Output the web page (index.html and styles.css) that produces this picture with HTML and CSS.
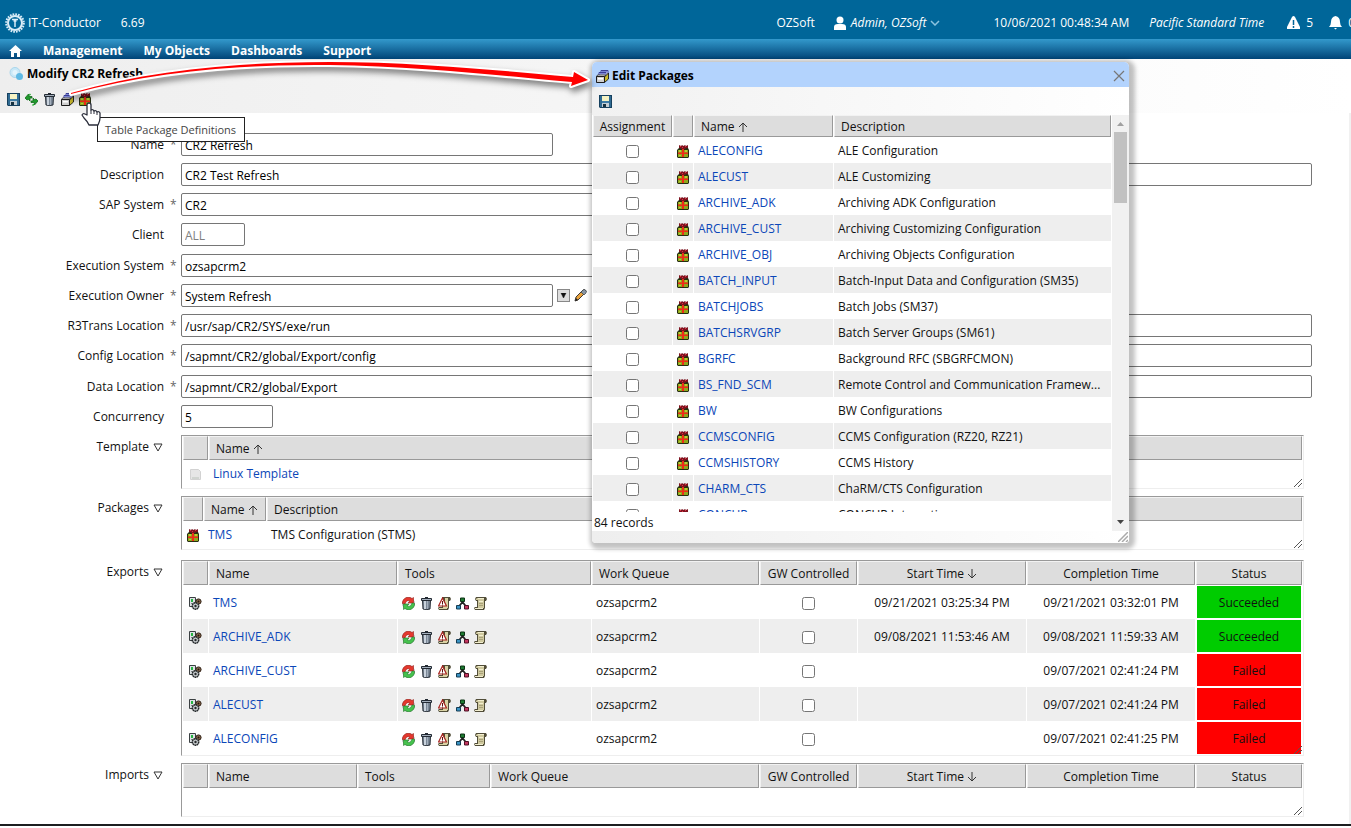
FILE: index.html
```html
<!DOCTYPE html>
<html lang="en">
<head>
    <meta charset="UTF-8">
    <meta name="viewport" content="width=device-width, initial-scale=1.0">
    <title>IT-Conductor - Modify CR2 Refresh</title>
    <link rel="stylesheet" href="styles.css">
</head>
<body>
    <!-- Shared icons -->
    <svg class="sprite" aria-hidden="true">
        <symbol id="i-save" viewBox="0 0 13 13">
            <path d="M0 0h13v13H1l-1-1z" fill="#16405e"/>
            <path d="M1 1h2v11H1zM10 1h2v11h-2z" fill="#2f6a92"/>
            <path d="M3 1h7v5H3z" fill="#f6f3c4"/>
            <path d="M3 6h7v2H3z" fill="#3d7ca6"/>
            <path d="M3 8h7v4H3z" fill="#c3ced6"/>
            <path d="M4 9h3v3H4z" fill="#16303f"/>
        </symbol>
        <symbol id="i-refresh" viewBox="0 0 13 13">
            <path d="M0 5l3.500-4v2.500H7V5H5v3L3.500 6.500 2 7z" fill="#1f9b2c" stroke="#146b1d" stroke-width=".8"/>
            <path d="M13 8l-3.500 4V9.500H6V8h2V5l1.500 1.500L11 6z" fill="#1f9b2c" stroke="#146b1d" stroke-width=".8"/>
            <path d="M4 2.500L5.500 1M9 11l-1.500 1.500" stroke="#2fb43c" stroke-width="1.500"/>
        </symbol>
        <symbol id="i-trash" viewBox="0 0 13 13">
            <path d="M2.500 3h8L10 12q-3 1-7 0z" fill="#7b8897" stroke="#232a33"/>
            <path d="M4 4h2v8H4z" fill="#c9d2dc"/>
            <path d="M7 4h1v8H7z" fill="#a4afbc"/>
            <path d="M1.500 1.500h10v2h-10z" fill="#a5b0bd" stroke="#232a33"/>
            <path d="M5 0h3v1H5z" fill="#232a33"/>
        </symbol>
        <symbol id="i-stack" viewBox="0 0 13 13">
            <path d="M5 .5h7v6H5z" fill="#fff" stroke="#3a3f96"/>
            <path d="M5 1h7v1.500H5z" fill="#7c86d8"/>
            <path d="M3 2.500h7v6H3z" fill="#fff" stroke="#3a3f96"/>
            <path d="M3 3h7v1.500H3z" fill="#7c86d8"/>
            <path d="M1.500 5h8l-1 2h-8z" fill="#fff" stroke="#1c1c1c" stroke-width=".8"/>
            <path d="M8.500 7l4-4v6l-4 3.500z" fill="#c9b92c" stroke="#1c1c1c" stroke-width=".9"/>
            <path d="M.5 6.500h8v6h-8z" fill="#cfcfcf" stroke="#1c1c1c"/>
            <path d="M2 8h5v1.500H2z" fill="#fff"/>
        </symbol>
        <symbol id="i-gift" viewBox="0 0 13 13">
            <path d="M2 3h9l1 2v7l-1 1H1l-1-1V5z" fill="#262e10"/>
            <path d="M1 5h10v3H1zM1 9h10v3H1z" fill="#8fa81c"/>
            <path d="M2 5h2v2H2zM8 5h2v2H8zM2 10h2v1H2z" fill="#b9cc33"/>
            <path d="M5 4h2v8H5zM1 7.500h10v1.500H1z" fill="#ee2c18"/>
            <path d="M2 0l2 1 1-1 1.500 1L8 0l1 1 2-1v3H9L8 4H4L3 3H2z" fill="#7d1420"/>
            <path d="M3 1h1v1H3zM5 2h1v1H5zM8 1h1v1H8z" fill="#e23444"/>
        </symbol>
        <symbol id="i-job" viewBox="0 0 13 13">
            <path d="M.5.500h6v9h-6z" fill="#dde2e4" stroke="#3b4042"/>
            <path d="M2 2h2v3H2z" fill="#27b544"/>
            <path d="M2 6h3v1H2z" fill="#7c8386"/>
            <circle cx="9.500" cy="4.500" r="2.600" fill="#8b6a4c" stroke="#2b1d13"/>
            <circle cx="9.500" cy="4.500" r="1" fill="#221510"/>
            <circle cx="6.500" cy="9" r="3.200" fill="#c9cdcf" stroke="#25292b" stroke-width="1.500" stroke-dasharray="1.700 .4"/>
            <circle cx="6.500" cy="9" r="1.200" fill="#25292b"/>
        </symbol>
        <symbol id="i-cycle" viewBox="0 0 13 13">
            <circle cx="6.500" cy="6.500" r="6" fill="#f6f6f6" stroke="#8b8b8b" stroke-width=".6"/>
            <path d="M.3 6.500C.5 1 6-1.500 10 1.500L11.500.500V6H6l1.800-2C5.500 3 4 4 3 7z" fill="#e4382e" stroke="#98201a" stroke-width=".6"/>
            <path d="M12.700 6.500C12.500 12 7 14.500 3 11.500L1.500 12.500V7H7L5.200 9C7.500 10 9 9 10 6z" fill="#45c24d" stroke="#1f7427" stroke-width=".6"/>
        </symbol>
        <symbol id="i-scroll" viewBox="0 0 13 13">
            <path d="M2 0h10l1 2-1 2h-1v7l-1 2H1l-1-2 1-1h2V4H2L1 2z" fill="#514d38"/>
            <path d="M3 1h7v10H4V3H2V2z" fill="#cfc99f"/>
            <path d="M4 1h6v1H4zM1 11h8v1H1zM5 4h4v1H5z" fill="#f2eecf"/>
            <path d="M5 6h4v1H5zM5 8h4v1H5z" fill="#aaa27a"/>
        </symbol>
        <symbol id="i-errlog" viewBox="0 0 13 13">
            <path d="M4 0h8l1 2-1 2h-1v7l-1 2H1l-1-2 1-1h3z" fill="#514d38"/>
            <path d="M7 1h3v10H5V9h2zM1 11h8v1H1z" fill="#d9d2a4"/>
            <path d="M4.500 1L8.500 9h-8z" fill="#fff" stroke="#a8241f" stroke-width="1.200"/>
            <path d="M4 4h1v3H4zM4 7.500h1v1H4z" fill="#5e0f0d"/>
        </symbol>
        <symbol id="i-tree" viewBox="0 0 13 13">
            <path d="M6.500 4v3M6.500 5L2.500 10M6.500 5l4 5" stroke="#222" stroke-width="1.800"/>
            <path d="M4.500 1h4v3.500h-4z" fill="#1d7a31" stroke="#0d3315"/>
            <path d="M.5 8.500h4v3.500h-4z" fill="#3a93c4" stroke="#143b52"/>
            <path d="M8.500 8.500h4v3.500h-4z" fill="#c43660" stroke="#4c1022"/>
        </symbol>
        <symbol id="i-up" viewBox="0 0 10 10">
            <path d="M5 10V1M1 5l4-4 4 4" fill="none" stroke="#333" stroke-width="1"/>
        </symbol>
        <symbol id="i-down" viewBox="0 0 10 10">
            <path d="M5 0v9M1 5l4 4 4-4" fill="none" stroke="#333" stroke-width="1"/>
        </symbol>
        <symbol id="i-tri" viewBox="0 0 10 9">
            <path d="M1 1h8L5 8z" fill="none" stroke="#333" stroke-width="1"/>
        </symbol>
        <symbol id="i-grip" viewBox="0 0 10 10">
            <path d="M1 9l8-8M5 9l4-4" stroke="#555"/>
        </symbol>
    </svg>

    <header class="topbar">
        <svg class="logo" viewBox="0 0 20 20">
            <circle cx="10" cy="10" r="8.800" fill="none" stroke="#d9ecf7" stroke-width="2" stroke-dasharray="1.700 1.065"/>
            <circle cx="10" cy="10" r="7" fill="none" stroke="#d9ecf7" stroke-width="2"/>
            <path d="M7 6.500h6M10 6v8M8.500 8l3 0" stroke="#d9ecf7" stroke-width="1.500"/>
        </svg>
        <span class="brand">IT-Conductor</span>
        <span>6.69</span>
        <div class="session">
            <span class="org">OZSoft</span>
            <button class="user" type="button">
                <svg width="14" height="14" viewBox="0 0 14 14"><circle cx="7" cy="4" r="3.500" fill="#fff"/><path d="M1 14v-3q0-3 4-3h4q4 0 4 3v3z" fill="#fff"/></svg>
                <i>Admin, OZSoft</i>
                <svg class="chev" width="10" height="6" viewBox="0 0 10 6"><path d="M1 1l4 4 4-4" fill="none" stroke="#8cc3df" stroke-width="1.500"/></svg>
            </button>
            <time>10/06/2021 00:48:34 AM</time>
            <i class="zone">Pacific Standard Time</i>
            <span class="notice">
                <svg width="13" height="13" viewBox="0 0 13 13"><path d="M5 1q1.500-2 3 0l5 10v2H0v-2z" fill="#fff"/><path d="M6.500 4v5M6.500 10v2" stroke="#069" stroke-width="1.500"/></svg>
                5
            </span>
            <span class="notice">
                <svg width="13" height="14" viewBox="0 0 13 14"><path d="M6.500 0q4.500 1 4.500 6 0 3 2 5H0q2-2 2-5 0-5 4.500-6zM5 12h3l-1.500 1.500z" fill="#fff"/></svg>
                0
            </span>
        </div>
    </header>

    <nav class="menu">
        <a href="#" aria-label="Home"><svg width="13" height="12" viewBox="0 0 13 12"><path d="M6.500 0L13 6h-2v6H8V8H5v4H2V6H0z" fill="#fff"/></svg></a>
        <a href="#">Management</a>
        <a href="#">My Objects</a>
        <a href="#">Dashboards</a>
        <a href="#">Support</a>
    </nav>

    <section class="page-head">
        <h1>
            <svg width="15" height="14" viewBox="0 0 15 14"><circle cx="6" cy="5.500" r="5" fill="#c9e8f7" stroke="#a9d6ec"/><circle cx="6" cy="5.500" r="2.500" fill="#e3f4fc"/><circle cx="10.500" cy="9.500" r="3.500" fill="#5fb9e4"/></svg>
            Modify CR2 Refresh
        </h1>
        <div class="tools">
            <button type="button" aria-label="Save"><svg><use href="#i-save"/></svg></button>
            <button type="button" aria-label="Refresh"><svg><use href="#i-refresh"/></svg></button>
            <button type="button" aria-label="Delete"><svg><use href="#i-trash"/></svg></button>
            <button type="button" aria-label="Edit Packages"><svg><use href="#i-stack"/></svg></button>
            <button type="button" aria-label="Table Package Definitions"><svg><use href="#i-gift"/></svg></button>
        </div>
    </section>

    <main class="page">
        <form class="form">
            <div class="group">
                <div class="field"><label class="req" for="name">Name</label><input class="mid" id="name" type="text" value="CR2 Refresh"></div>
                <div class="field"><label for="desc">Description</label><input id="desc" type="text" value="CR2 Test Refresh"></div>
                <div class="field"><label class="req" for="sap">SAP System</label><input class="half" id="sap" type="text" value="CR2"></div>
                <div class="field"><label for="client">Client</label><input class="tiny" id="client" type="text" placeholder="ALL"></div>
            </div>
            <div class="group">
                <div class="field"><label class="req" for="exec">Execution System</label><input class="half" id="exec" type="text" value="ozsapcrm2"></div>
                <div class="field">
                    <label class="req" for="owner">Execution Owner</label><input class="mid" id="owner" type="text" value="System Refresh">
                    <button class="drop" type="button" aria-label="Choose owner"><svg width="7" height="5" viewBox="0 0 7 5"><path d="M1 0h5L3.500 5z" fill="#111" stroke="#111" stroke-width=".5"/></svg></button>
                    <button class="edit" type="button" aria-label="Edit owner"><svg width="13" height="13" viewBox="0 0 13 13"><path d="M1 12l1-4 7-7q2-1 3 1 0 1-1 2l-7 7z" fill="#e9a23b" stroke="#3f3a35"/><path d="M7 3l3 3 2-2q1-2-.5-3T9 1z" fill="#8795a3" stroke="#3a3f44" stroke-width=".7"/><path d="M1 12l1-3 2 2z" fill="#222"/></svg></button>
                </div>
                <div class="field"><label class="req" for="r3">R3Trans Location</label><input id="r3" type="text" value="/usr/sap/CR2/SYS/exe/run"></div>
                <div class="field"><label class="req" for="config">Config Location</label><input id="config" type="text" value="/sapmnt/CR2/global/Export/config"></div>
            </div>
            <div class="group">
                <div class="field"><label class="req" for="data">Data Location</label><input id="data" type="text" value="/sapmnt/CR2/global/Export"></div>
                <div class="field"><label for="conc">Concurrency</label><input class="small" id="conc" type="text" value="5"></div>
            </div>
        </form>

        <section class="block">
            <h2>Template <svg class="tri"><use href="#i-tri"/></svg></h2>
            <div class="list">
                <table>
                    <colgroup><col class="c-icon"><col></colgroup>
                    <thead><tr><th></th><th>Name <svg class="sort"><use href="#i-up"/></svg></th></tr></thead>
                    <tbody>
                        <tr><td class="mid-cell"><svg class="icon" viewBox="0 0 13 13"><path d="M1.500 1.500h8l2 2v8h-10z" fill="#e6e6e6" stroke="#d2d2d2"/><path d="M3 9h7v2H3z" fill="#d0d4d0"/></svg></td><td><a href="#">Linux Template</a></td></tr>
                    </tbody>
                </table>
                <svg class="grip"><use href="#i-grip"/></svg>
            </div>
        </section>

        <section class="block">
            <h2>Packages <svg class="tri"><use href="#i-tri"/></svg></h2>
            <div class="list">
                <table>
                    <colgroup><col class="c-gift"><col class="c-short"><col></colgroup>
                    <thead><tr><th></th><th>Name <svg class="sort"><use href="#i-up"/></svg></th><th>Description</th></tr></thead>
                    <tbody>
                        <tr><td class="mid-cell"><svg class="icon"><use href="#i-gift"/></svg></td><td><a href="#">TMS</a></td><td>TMS Configuration (STMS)</td></tr>
                    </tbody>
                </table>
                <svg class="grip"><use href="#i-grip"/></svg>
            </div>
        </section>

        <section class="block exports">
            <h2>Exports <svg class="tri"><use href="#i-tri"/></svg></h2>
            <div class="list">
                <table class="tall">
                    <colgroup><col class="c-icon"><col class="c-name"><col class="c-tools"><col><col class="c-gw"><col class="c-time"><col class="c-time"><col class="c-status"></colgroup>
                    <thead>
                        <tr><th></th><th>Name</th><th>Tools</th><th>Work Queue</th><th class="mid-cell">GW Controlled</th><th class="mid-cell">Start Time <svg class="sort"><use href="#i-down"/></svg></th><th class="mid-cell">Completion Time</th><th class="mid-cell">Status</th></tr>
                    </thead>
                    <tbody>
                        <tr>
                            <td class="mid-cell"><svg class="icon"><use href="#i-job"/></svg></td><td><a href="#">TMS</a></td>
                            <td><div class="row-tools"><svg><use href="#i-cycle"/></svg><svg><use href="#i-trash"/></svg><svg><use href="#i-errlog"/></svg><svg><use href="#i-tree"/></svg><svg><use href="#i-scroll"/></svg></div></td>
                            <td>ozsapcrm2</td><td class="mid-cell"><input type="checkbox" aria-label="GW controlled, TMS"></td>
                            <td class="mid-cell">09/21/2021 03:25:34 PM</td><td class="mid-cell">09/21/2021 03:32:01 PM</td><td class="status ok">Succeeded</td>
                        </tr>
                        <tr>
                            <td class="mid-cell"><svg class="icon"><use href="#i-job"/></svg></td><td><a href="#">ARCHIVE_ADK</a></td>
                            <td><div class="row-tools"><svg><use href="#i-cycle"/></svg><svg><use href="#i-trash"/></svg><svg><use href="#i-errlog"/></svg><svg><use href="#i-tree"/></svg><svg><use href="#i-scroll"/></svg></div></td>
                            <td>ozsapcrm2</td><td class="mid-cell"><input type="checkbox" aria-label="GW controlled, ARCHIVE_ADK"></td>
                            <td class="mid-cell">09/08/2021 11:53:46 AM</td><td class="mid-cell">09/08/2021 11:59:33 AM</td><td class="status ok">Succeeded</td>
                        </tr>
                        <tr>
                            <td class="mid-cell"><svg class="icon"><use href="#i-job"/></svg></td><td><a href="#">ARCHIVE_CUST</a></td>
                            <td><div class="row-tools"><svg><use href="#i-cycle"/></svg><svg><use href="#i-trash"/></svg><svg><use href="#i-errlog"/></svg><svg><use href="#i-tree"/></svg><svg><use href="#i-scroll"/></svg></div></td>
                            <td>ozsapcrm2</td><td class="mid-cell"><input type="checkbox" aria-label="GW controlled, ARCHIVE_CUST"></td>
                            <td></td><td class="mid-cell">09/07/2021 02:41:24 PM</td><td class="status fail">Failed</td>
                        </tr>
                        <tr>
                            <td class="mid-cell"><svg class="icon"><use href="#i-job"/></svg></td><td><a href="#">ALECUST</a></td>
                            <td><div class="row-tools"><svg><use href="#i-cycle"/></svg><svg><use href="#i-trash"/></svg><svg><use href="#i-errlog"/></svg><svg><use href="#i-tree"/></svg><svg><use href="#i-scroll"/></svg></div></td>
                            <td>ozsapcrm2</td><td class="mid-cell"><input type="checkbox" aria-label="GW controlled, ALECUST"></td>
                            <td></td><td class="mid-cell">09/07/2021 02:41:24 PM</td><td class="status fail">Failed</td>
                        </tr>
                        <tr>
                            <td class="mid-cell"><svg class="icon"><use href="#i-job"/></svg></td><td><a href="#">ALECONFIG</a></td>
                            <td><div class="row-tools"><svg><use href="#i-cycle"/></svg><svg><use href="#i-trash"/></svg><svg><use href="#i-errlog"/></svg><svg><use href="#i-tree"/></svg><svg><use href="#i-scroll"/></svg></div></td>
                            <td>ozsapcrm2</td><td class="mid-cell"><input type="checkbox" aria-label="GW controlled, ALECONFIG"></td>
                            <td></td><td class="mid-cell">09/07/2021 02:41:25 PM</td><td class="status fail">Failed</td>
                        </tr>
                    </tbody>
                </table>
                <svg class="grip"><use href="#i-grip"/></svg>
            </div>
        </section>

        <section class="block">
            <h2>Imports <svg class="tri"><use href="#i-tri"/></svg></h2>
            <div class="list">
                <table>
                    <colgroup><col class="c-icon"><col class="c-iname"><col class="c-itools"><col><col class="c-gw"><col class="c-time"><col class="c-time"><col class="c-status"></colgroup>
                    <thead>
                        <tr><th></th><th>Name</th><th>Tools</th><th>Work Queue</th><th class="mid-cell">GW Controlled</th><th class="mid-cell">Start Time <svg class="sort"><use href="#i-down"/></svg></th><th class="mid-cell">Completion Time</th><th class="mid-cell">Status</th></tr>
                    </thead>
                </table>
                <svg class="grip"><use href="#i-grip"/></svg>
            </div>
        </section>
    </main>
    <div class="bottom-line"></div>

    <!-- Edit Packages window -->
    <div class="dialog" role="dialog" aria-label="Edit Packages">
        <div class="dialog-title">
            <svg class="icon"><use href="#i-stack"/></svg>
            <b>Edit Packages</b>
            <button type="button" aria-label="Close"><svg width="12" height="12" viewBox="0 0 12 12"><path d="M1 1l10 10M11 1L1 11" stroke="#777" stroke-width="1.200"/></svg></button>
        </div>
        <div class="dialog-tools"><button type="button" aria-label="Save"><svg class="icon"><use href="#i-save"/></svg></button></div>
        <div class="dialog-main">
            <div class="dialog-list">
                <div class="rows">
                    <table>
                        <colgroup><col class="d-assign"><col class="d-icon"><col class="d-name"><col></colgroup>
                        <thead><tr><th class="mid-cell">Assignment</th><th></th><th>Name <svg class="sort"><use href="#i-up"/></svg></th><th>Description</th></tr></thead>
                        <tbody>
                            <tr><td class="mid-cell"><input type="checkbox" aria-label="Assign ALECONFIG"></td><td class="mid-cell"><svg class="icon"><use href="#i-gift"/></svg></td><td><a href="#">ALECONFIG</a></td><td>ALE Configuration</td></tr>
                            <tr><td class="mid-cell"><input type="checkbox" aria-label="Assign ALECUST"></td><td class="mid-cell"><svg class="icon"><use href="#i-gift"/></svg></td><td><a href="#">ALECUST</a></td><td>ALE Customizing</td></tr>
                            <tr><td class="mid-cell"><input type="checkbox" aria-label="Assign ARCHIVE_ADK"></td><td class="mid-cell"><svg class="icon"><use href="#i-gift"/></svg></td><td><a href="#">ARCHIVE_ADK</a></td><td>Archiving ADK Configuration</td></tr>
                            <tr><td class="mid-cell"><input type="checkbox" aria-label="Assign ARCHIVE_CUST"></td><td class="mid-cell"><svg class="icon"><use href="#i-gift"/></svg></td><td><a href="#">ARCHIVE_CUST</a></td><td>Archiving Customizing Configuration</td></tr>
                            <tr><td class="mid-cell"><input type="checkbox" aria-label="Assign ARCHIVE_OBJ"></td><td class="mid-cell"><svg class="icon"><use href="#i-gift"/></svg></td><td><a href="#">ARCHIVE_OBJ</a></td><td>Archiving Objects Configuration</td></tr>
                            <tr><td class="mid-cell"><input type="checkbox" aria-label="Assign BATCH_INPUT"></td><td class="mid-cell"><svg class="icon"><use href="#i-gift"/></svg></td><td><a href="#">BATCH_INPUT</a></td><td>Batch-Input Data and Configuration (SM35)</td></tr>
                            <tr><td class="mid-cell"><input type="checkbox" aria-label="Assign BATCHJOBS"></td><td class="mid-cell"><svg class="icon"><use href="#i-gift"/></svg></td><td><a href="#">BATCHJOBS</a></td><td>Batch Jobs (SM37)</td></tr>
                            <tr><td class="mid-cell"><input type="checkbox" aria-label="Assign BATCHSRVGRP"></td><td class="mid-cell"><svg class="icon"><use href="#i-gift"/></svg></td><td><a href="#">BATCHSRVGRP</a></td><td>Batch Server Groups (SM61)</td></tr>
                            <tr><td class="mid-cell"><input type="checkbox" aria-label="Assign BGRFC"></td><td class="mid-cell"><svg class="icon"><use href="#i-gift"/></svg></td><td><a href="#">BGRFC</a></td><td>Background RFC (SBGRFCMON)</td></tr>
                            <tr><td class="mid-cell"><input type="checkbox" aria-label="Assign BS_FND_SCM"></td><td class="mid-cell"><svg class="icon"><use href="#i-gift"/></svg></td><td><a href="#">BS_FND_SCM</a></td><td>Remote Control and Communication Framew...</td></tr>
                            <tr><td class="mid-cell"><input type="checkbox" aria-label="Assign BW"></td><td class="mid-cell"><svg class="icon"><use href="#i-gift"/></svg></td><td><a href="#">BW</a></td><td>BW Configurations</td></tr>
                            <tr><td class="mid-cell"><input type="checkbox" aria-label="Assign CCMSCONFIG"></td><td class="mid-cell"><svg class="icon"><use href="#i-gift"/></svg></td><td><a href="#">CCMSCONFIG</a></td><td>CCMS Configuration (RZ20, RZ21)</td></tr>
                            <tr><td class="mid-cell"><input type="checkbox" aria-label="Assign CCMSHISTORY"></td><td class="mid-cell"><svg class="icon"><use href="#i-gift"/></svg></td><td><a href="#">CCMSHISTORY</a></td><td>CCMS History</td></tr>
                            <tr><td class="mid-cell"><input type="checkbox" aria-label="Assign CHARM_CTS"></td><td class="mid-cell"><svg class="icon"><use href="#i-gift"/></svg></td><td><a href="#">CHARM_CTS</a></td><td>ChaRM/CTS Configuration</td></tr>
                            <tr><td class="mid-cell"><input type="checkbox" aria-label="Assign CONCUR"></td><td class="mid-cell"><svg class="icon"><use href="#i-gift"/></svg></td><td><a href="#">CONCUR</a></td><td>CONCUR Integration</td></tr>
                        </tbody>
                    </table>
                </div>
                <div class="count">84 records</div>
            </div>
            <div class="scroll">
                <svg width="7" height="4" viewBox="0 0 7 4"><path d="M0 4h7L3.500 0z" fill="#a0a0a0"/></svg>
                <div class="thumb"></div>
                <svg width="7" height="4" viewBox="0 0 7 4"><path d="M0 0h7L3.500 4z" fill="#444"/></svg>
            </div>
        </div>
        <div class="dialog-foot"><svg width="10" height="10" viewBox="0 0 10 10"><path d="M0 10L10 0M4 10l6-6M8 10l2-2" stroke="#aaa" stroke-width="1.500"/></svg></div>
    </div>

    <div class="tip" role="tooltip">Table Package Definitions</div>

    <!-- Arrow from the toolbar button to the window it opens -->
    <svg class="arrow" viewBox="0 0 530 50" width="530" height="50">
        <path d="M6 36C90 12 180 5 265 5C350 5 440 14 508 20L509 15L523 23L506 29L507 25C440 19 350 9 265 8C180 7 90 14 6 37z" fill="#f00" stroke="#fff" stroke-width="4" stroke-linejoin="round" paint-order="stroke"/>
    </svg>
    <svg class="hand" width="20" height="24" viewBox="0 0 20 24">
        <path d="M6 13V3q0-2 2-2t2 2v5q2-1 3 1 2-1 3 1 2-1 3 1v5q0 3-2 7H8q-1-3-5-7l-2-3q1-2 3-1z" fill="#fff" stroke="#2a2d3a" stroke-width="1.300" stroke-linejoin="round"/>
        <path d="M10 8v4M13 9v3M16 10v3" stroke="#2a2d3a"/>
    </svg>
</body>
</html>
```

FILE: styles.css
```css
* {
    box-sizing: border-box;
}

body {
    margin: 0;
    position: relative;
    font-family: "Open Sans", "Noto Sans", sans-serif;
    font-size: 12px;
    line-height: 16px;
    color: #111;
    background: #fff;
    overflow: hidden;
}

a {
    color: #0b46b8;
    text-decoration: none;
}

button {
    padding: 0;
    border: none;
    background: none;
    font: inherit;
    color: inherit;
    cursor: pointer;
}

svg {
    display: block;
    flex: none;
}

input[type="checkbox"] {
    display: block;
    width: 13px;
    height: 13px;
    margin: 1px auto 0;
}

.sprite {
    display: none;
}

.icon {
    width: 13px;
    height: 13px;
    margin: 1px auto 0;
}

/* Top bar */
.topbar {
    display: flex;
    align-items: center;
    height: 39px;
    padding: 6px 0 0 5px;
    color: #fff;
    background: #069;
    white-space: nowrap;
    overflow: hidden;
}

.logo {
    width: 20px;
    height: 20px;
    margin-right: 3px;
}

.brand {
    margin-right: 20px;
}

.session {
    display: flex;
    align-items: center;
    margin-left: auto;
    margin-right: -4px;
}

.user {
    display: flex;
    align-items: center;
    gap: 4px;
    margin: 0 53px 0 18px;
}

.zone {
    margin: 0 23px 0 20px;
}

.notice {
    display: flex;
    align-items: center;
    gap: 6px;
}

.notice + .notice {
    margin-left: 16px;
}

/* Menu */
.menu {
    display: flex;
    align-items: center;
    gap: 21px;
    height: 20px;
    padding: 4px 9px 0;
    background: linear-gradient(#39c, #047);
}

.menu a {
    color: #fff;
    font-weight: bold;
}

/* Page heading */
.page-head {
    height: 54px;
    padding: 7px 7px 0;
    background: linear-gradient(to right, #eee, #fff);
}

h1 {
    display: flex;
    align-items: center;
    gap: 3px;
    margin: 0 0 11px 2px;
    font-size: 12px;
    line-height: 16px;
    color: #000;
}

.tools {
    display: flex;
    gap: 5px;
}

.tools svg {
    width: 13px;
    height: 13px;
}

/* Form */
.page {
    padding: 20px 37px 7px 0;
    border-right: 2px solid #f1f1f1;
}

.form,
.group {
    display: flex;
    flex-direction: column;
}

.group {
    gap: 7px;
}

.form {
    gap: 8px;
}

.field {
    display: flex;
    align-items: center;
}

.field label {
    width: 181px;
    padding-right: 17px;
    text-align: right;
    flex: none;
}

.field .req {
    padding-right: 5px;
}

.req::after {
    content: "*";
    display: inline-block;
    width: 6px;
    margin-left: 6px;
    color: #666;
}

.field input {
    flex: 1;
    min-width: 0;
    height: 23px;
    padding: 2px 3px 0;
    border: 1px solid #767676;
    border-radius: 2px;
    font: inherit;
    color: #000;
    background: #fff;
}

.field .mid {
    flex: 0 0 372px;
}

.field .half {
    flex: 0 0 50%;
}

.field .tiny {
    flex: 0 0 64px;
}

.field .small {
    flex: 0 0 92px;
}

.field input::placeholder {
    color: #808080;
}

.drop {
    display: flex;
    align-items: center;
    justify-content: center;
    width: 13px;
    height: 13px;
    margin: 0 4px;
    border: 1px solid #888;
    background: #ddd;
}

/* Lists */
.block {
    display: flex;
    margin: 7px 8px 0 0;
}

.exports {
    margin-top: 10px;
}

h2 {
    display: flex;
    align-items: center;
    justify-content: flex-end;
    gap: 4px;
    width: 181px;
    height: 24px;
    margin: 0;
    padding-right: 18px;
    font-size: 12px;
    font-weight: normal;
    flex: none;
}

.tri {
    width: 10px;
    height: 9px;
}

.list {
    position: relative;
    flex: 1;
    min-width: 0;
    min-height: 54px;
    border: 1px solid #eee;
    border-top-color: #999;
    border-left-color: #999;
}

table {
    width: 100%;
    table-layout: fixed;
    border-collapse: separate;
    border-spacing: 1px 0;
}

th {
    height: 24px;
    padding: 1px 5px 0 6px;
    border: 1px solid #999;
    border-top-color: #f2f2f2;
    border-left-color: #f2f2f2;
    background: #ddd;
    font-weight: normal;
    text-align: left;
    white-space: nowrap;
}

td {
    height: 26px;
    padding: 1px 0 0 4px;
    white-space: nowrap;
    overflow: hidden;
}

tbody tr:nth-child(even) td {
    background: #eee;
}

.tall td {
    height: 34px;
}

th.mid-cell,
td.mid-cell {
    padding-left: 0;
    padding-right: 0;
    text-align: center;
}

.sort {
    display: inline-block;
    width: 10px;
    height: 10px;
    vertical-align: -1px;
}

.c-icon { width: 25px; }
.c-gift { width: 20px; }
.c-short { width: 62px; }
.c-name { width: 188px; }
.c-tools { width: 193px; }
.c-iname { width: 148px; }
.c-itools { width: 132px; }
.c-gw { width: 97px; }
.c-time { width: 168px; }
.c-status { width: 106px; }

.row-tools {
    display: flex;
    gap: 5px;
    padding-top: 1px;
}

.row-tools svg {
    width: 13px;
    height: 13px;
}

.tall .status {
    padding: 1px 0 0;
    text-align: center;
    border: 1px solid #fff;
}

tbody tr .status.ok,
tbody tr:nth-child(even) .status.ok {
    background: #0c0;
}

tbody tr .status.fail,
tbody tr:nth-child(even) .status.fail {
    background: #f00;
}

.grip {
    position: absolute;
    right: 0;
    bottom: 0;
    width: 10px;
    height: 10px;
}

.bottom-line {
    height: 2px;
    background: #1c1e20;
}

/* Edit Packages window */
.dialog {
    position: absolute;
    left: 592px;
    top: 62px;
    width: 537px;
    border-radius: 5px 5px 4px 4px;
    background: #fff;
    box-shadow: 2px 2px 4px 4px rgba(0, 0, 0, 0.24);
    overflow: hidden;
}

.dialog-title {
    display: flex;
    align-items: center;
    gap: 3px;
    height: 25px;
    padding: 2px 4px 0;
    color: #000;
    background: #b3d3fd;
}

.dialog-title .icon {
    margin: 2px 0 0;
}

.dialog-title button {
    margin-left: auto;
}

.dialog-tools {
    height: 28px;
    padding: 7px 7px 0;
    background: linear-gradient(to right, #f1f1f1, #fff);
}

.dialog-main {
    display: flex;
}

.dialog-list {
    flex: 1;
    min-width: 0;
}

.rows {
    height: 397px;
    overflow: hidden;
}

.rows th {
    height: 22px;
}

.d-assign { width: 79px; }
.d-icon { width: 20px; }
.d-name { width: 139px; }

.count {
    height: 19px;
    padding: 3px 2px 0;
}

.scroll {
    display: flex;
    flex-direction: column;
    align-items: center;
    width: 17px;
    padding: 7px 2px;
    background: #f1f1f1;
}

.scroll svg:last-child {
    margin-top: auto;
}

.thumb {
    width: 13px;
    height: 71px;
    margin-top: 6px;
    background: #c1c1c1;
}

.dialog-foot {
    display: flex;
    justify-content: flex-end;
    align-items: flex-end;
    height: 12px;
    padding: 1px;
    background: linear-gradient(to right, #eee, #fff);
}

/* Overlays */
.tip {
    position: absolute;
    left: 97px;
    top: 117px;
    padding: 4px 8px 3px 7px;
    border: 1px solid #222;
    font-size: 11px;
    color: #444;
    background: #fff;
}

.arrow {
    position: absolute;
    left: 65px;
    top: 57px;
    overflow: visible;
    filter: drop-shadow(2px 4px 3px rgba(0, 0, 0, 0.5));
    pointer-events: none;
}

.hand {
    position: absolute;
    left: 81px;
    top: 102px;
}
```
